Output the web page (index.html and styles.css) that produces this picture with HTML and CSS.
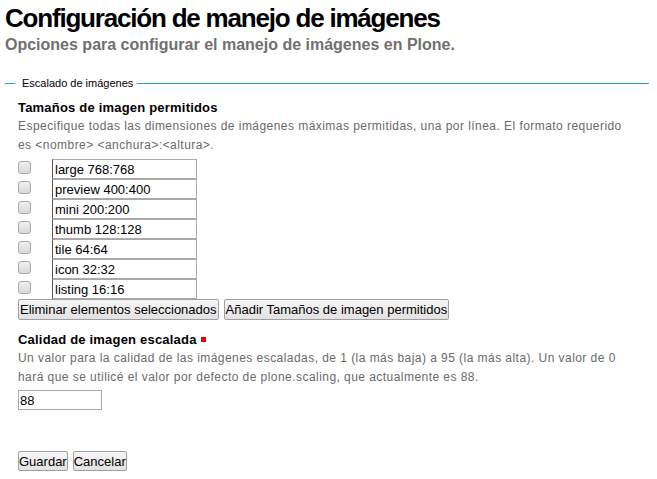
FILE: index.html
```html
<!DOCTYPE html>
<html lang="es">
<head>
<meta charset="utf-8">
<link rel="stylesheet" href="styles.css">
</head>
<body>
<h1 class="title">Configuración de manejo de imágenes</h1>
<p class="subtitle">Opciones para configurar el manejo de imágenes en Plone.</p>
<section class="group">
  <div class="group-head">
    <span class="group-line group-line-short"></span>
    <span class="group-legend">Escalado de imágenes</span>
    <span class="group-line"></span>
  </div>
  <div class="group-body">
    <div class="field">
      <div class="label">Tamaños de imagen permitidos</div>
      <div class="help">Especifique todas las dimensiones de imágenes máximas permitidas, una por línea. El formato requerido es &lt;nombre&gt; &lt;anchura&gt;:&lt;altura&gt;.</div>
      <div class="sizes">
        <div class="size-row"><input type="checkbox" class="check"><input type="text" class="size-input" value="large 768:768"></div>
        <div class="size-row"><input type="checkbox" class="check"><input type="text" class="size-input" value="preview 400:400"></div>
        <div class="size-row"><input type="checkbox" class="check"><input type="text" class="size-input" value="mini 200:200"></div>
        <div class="size-row"><input type="checkbox" class="check"><input type="text" class="size-input" value="thumb 128:128"></div>
        <div class="size-row"><input type="checkbox" class="check"><input type="text" class="size-input" value="tile 64:64"></div>
        <div class="size-row"><input type="checkbox" class="check"><input type="text" class="size-input" value="icon 32:32"></div>
        <div class="size-row"><input type="checkbox" class="check"><input type="text" class="size-input" value="listing 16:16"></div>
      </div>
      <div class="button-row">
        <button class="btn">Eliminar elementos seleccionados</button>
        <button class="btn">Añadir Tamaños de imagen permitidos</button>
      </div>
    </div>
    <div class="field field-quality">
      <div class="label">Calidad de imagen escalada <span class="required"></span></div>
      <div class="help">Un valor para la calidad de las imágenes escaladas, de 1 (la más baja) a 95 (la más alta). Un valor de 0 hará que se utilicé el valor por defecto de plone.scaling, que actualmente es 88.</div>
      <input type="text" class="quality-input" value="88">
    </div>
    <div class="button-row form-actions">
      <button class="btn">Guardar</button>
      <button class="btn">Cancelar</button>
    </div>
  </div>
</section>
</body>
</html>
```
FILE: styles.css
```css
html, body {
  margin: 0;
  padding: 0;
  background: #fff;
}
body {
  padding: 2px 8px 0 5px;
  font-family: "Liberation Sans", Arial, sans-serif;
  color: #000;
}
.title {
  margin: 0;
  font-size: 26px;
  line-height: 32px;
  font-weight: bold;
  letter-spacing: -1.2px;
}
.subtitle {
  margin: 1px 0 0;
  font-size: 16px;
  line-height: 20px;
  font-weight: bold;
  color: #707070;
}
.group {
  margin-top: 22px;
}
.group-head {
  display: flex;
  align-items: center;
  gap: 7px;
  height: 13px;
}
.group-line {
  flex: 1;
  height: 1px;
  background: #2b9bd3;
}
.group-line-short {
  flex: 0 0 10px;
}
.group-legend {
  font-size: 11px;
  line-height: 13px;
  margin-right: -3px;
}
.group-body {
  padding-left: 13px;
}
.field {
  margin-top: 9px;
}
.label {
  font-size: 13px;
  font-weight: bold;
  line-height: 18px;
  letter-spacing: 0.2px;
}
.help {
  font-size: 12px;
  line-height: 19px;
  color: #6a6a6a;
  letter-spacing: 0.45px;
  max-width: 610px;
}
.sizes {
  display: flex;
  flex-direction: column;
  margin-top: 4px;
}
.size-row {
  display: flex;
  align-items: flex-start;
  height: 20px;
}
.check {
  appearance: none;
  -webkit-appearance: none;
  width: 13px;
  height: 13px;
  margin: 2px 21px 0 0;
  border: 1px solid #a8a8a8;
  border-radius: 3px;
  background: linear-gradient(#f0f0f0, #d8d8d8);
  box-sizing: border-box;
}
.size-input {
  width: 145px;
  height: 20px;
  box-sizing: border-box;
  margin: 0;
  padding: 0 2px;
  border: 1px solid #a9a9a9;
  border-left-color: #555;
  font-family: "Liberation Sans", Arial, sans-serif;
  font-size: 13px;
  color: #000;
  background: #fff;
  outline: none;
}
.button-row {
  display: flex;
  gap: 5px;
}
.btn {
  height: 21px;
  margin: 0;
  padding: 0 1px;
  border: 1px solid #a0a0a0;
  border-radius: 2px;
  background: linear-gradient(#f6f6f6, #e2e2e2);
  font-family: "Liberation Sans", Arial, sans-serif;
  font-size: 13px;
  color: #000;
}
.field-quality {
  margin-top: 11px;
}
.required {
  display: inline-block;
  width: 5px;
  height: 5px;
  background: #e00;
  vertical-align: 2px;
  margin-left: 1px;
}
.quality-input {
  display: block;
  width: 84px;
  height: 20px;
  box-sizing: border-box;
  margin: 3px 0 0;
  padding: 0 1px;
  border: 1px solid #a9a9a9;
  font-family: "Liberation Sans", Arial, sans-serif;
  font-size: 13px;
  color: #000;
  outline: none;
}
.form-actions {
  margin-top: 41px;
}
.form-actions .btn {
  height: 20px;
  padding: 0;
}
```
